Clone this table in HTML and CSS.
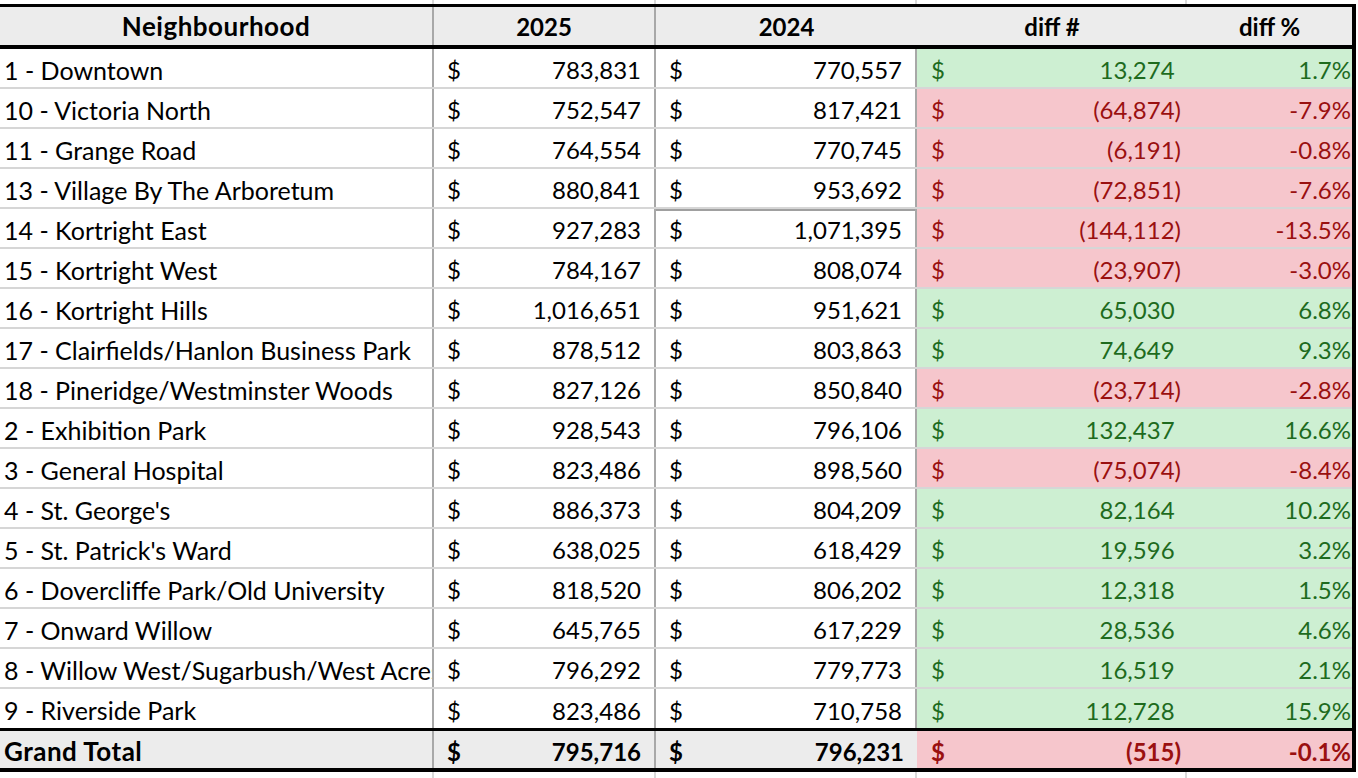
FILE: index.html
```html
<!DOCTYPE html>
<html>
<head>
<meta charset="utf-8">
<link rel="stylesheet" href="styles.css">
</head>
<body>
<div class="sheet">
  <div class="strip"><span></span><span></span><span></span><span></span><span class="last"></span></div>
  <div class="table">
    <div class="row head">
      <div class="cell center vr wide">Neighbourhood</div>
      <div class="cell center vr">2025</div>
      <div class="cell center">2024</div>
      <div class="cell center">diff #</div>
      <div class="cell center">diff %</div>
    </div>

    <div class="row">
      <div class="cell name vr">1 - Downtown</div>
      <div class="cell money vr"><span>$</span><span>783,831</span></div>
      <div class="cell money vr"><span>$</span><span>770,557</span></div>
      <div class="cell money diff good"><span>$</span><span>13,274<i class="ph">)</i></span></div>
      <div class="cell pct good">1.7%</div>
    </div>
    <div class="row">
      <div class="cell name vr">10 - Victoria North</div>
      <div class="cell money vr"><span>$</span><span>752,547</span></div>
      <div class="cell money vr"><span>$</span><span>817,421</span></div>
      <div class="cell money diff bad"><span>$</span><span>(64,874)</span></div>
      <div class="cell pct bad">-7.9%</div>
    </div>
    <div class="row">
      <div class="cell name vr">11 - Grange Road</div>
      <div class="cell money vr"><span>$</span><span>764,554</span></div>
      <div class="cell money vr"><span>$</span><span>770,745</span></div>
      <div class="cell money diff bad"><span>$</span><span>(6,191)</span></div>
      <div class="cell pct bad">-0.8%</div>
    </div>
    <div class="row">
      <div class="cell name vr">13 - Village By The Arboretum</div>
      <div class="cell money vr"><span>$</span><span>880,841</span></div>
      <div class="cell money vr"><span>$</span><span>953,692</span></div>
      <div class="cell money diff bad"><span>$</span><span>(72,851)</span></div>
      <div class="cell pct bad">-7.6%</div>
    </div>
    <div class="row">
      <div class="cell name vr">14 - Kortright East</div>
      <div class="cell money vr"><span>$</span><span>927,283</span></div>
      <div class="cell money vr topline"><span>$</span><span>1,071,395</span></div>
      <div class="cell money diff bad"><span>$</span><span>(144,112)</span></div>
      <div class="cell pct bad">-13.5%</div>
    </div>
    <div class="row">
      <div class="cell name vr">15 - Kortright West</div>
      <div class="cell money vr"><span>$</span><span>784,167</span></div>
      <div class="cell money vr"><span>$</span><span>808,074</span></div>
      <div class="cell money diff bad"><span>$</span><span>(23,907)</span></div>
      <div class="cell pct bad">-3.0%</div>
    </div>
    <div class="row">
      <div class="cell name vr">16 - Kortright Hills</div>
      <div class="cell money vr"><span>$</span><span>1,016,651</span></div>
      <div class="cell money vr"><span>$</span><span>951,621</span></div>
      <div class="cell money diff good"><span>$</span><span>65,030<i class="ph">)</i></span></div>
      <div class="cell pct good">6.8%</div>
    </div>
    <div class="row">
      <div class="cell name vr">17 - Clairfields/Hanlon Business Park</div>
      <div class="cell money vr"><span>$</span><span>878,512</span></div>
      <div class="cell money vr"><span>$</span><span>803,863</span></div>
      <div class="cell money diff good"><span>$</span><span>74,649<i class="ph">)</i></span></div>
      <div class="cell pct good">9.3%</div>
    </div>
    <div class="row">
      <div class="cell name vr">18 - Pineridge/Westminster Woods</div>
      <div class="cell money vr"><span>$</span><span>827,126</span></div>
      <div class="cell money vr"><span>$</span><span>850,840</span></div>
      <div class="cell money diff bad"><span>$</span><span>(23,714)</span></div>
      <div class="cell pct bad">-2.8%</div>
    </div>
    <div class="row">
      <div class="cell name vr">2 - Exhibition Park</div>
      <div class="cell money vr"><span>$</span><span>928,543</span></div>
      <div class="cell money vr"><span>$</span><span>796,106</span></div>
      <div class="cell money diff good"><span>$</span><span>132,437<i class="ph">)</i></span></div>
      <div class="cell pct good">16.6%</div>
    </div>
    <div class="row">
      <div class="cell name vr">3 - General Hospital</div>
      <div class="cell money vr"><span>$</span><span>823,486</span></div>
      <div class="cell money vr"><span>$</span><span>898,560</span></div>
      <div class="cell money diff bad"><span>$</span><span>(75,074)</span></div>
      <div class="cell pct bad">-8.4%</div>
    </div>
    <div class="row">
      <div class="cell name vr">4 - St. George's</div>
      <div class="cell money vr"><span>$</span><span>886,373</span></div>
      <div class="cell money vr"><span>$</span><span>804,209</span></div>
      <div class="cell money diff good"><span>$</span><span>82,164<i class="ph">)</i></span></div>
      <div class="cell pct good">10.2%</div>
    </div>
    <div class="row">
      <div class="cell name vr">5 - St. Patrick's Ward</div>
      <div class="cell money vr"><span>$</span><span>638,025</span></div>
      <div class="cell money vr"><span>$</span><span>618,429</span></div>
      <div class="cell money diff good"><span>$</span><span>19,596<i class="ph">)</i></span></div>
      <div class="cell pct good">3.2%</div>
    </div>
    <div class="row">
      <div class="cell name vr">6 - Dovercliffe Park/Old University</div>
      <div class="cell money vr"><span>$</span><span>818,520</span></div>
      <div class="cell money vr"><span>$</span><span>806,202</span></div>
      <div class="cell money diff good"><span>$</span><span>12,318<i class="ph">)</i></span></div>
      <div class="cell pct good">1.5%</div>
    </div>
    <div class="row">
      <div class="cell name vr">7 - Onward Willow</div>
      <div class="cell money vr"><span>$</span><span>645,765</span></div>
      <div class="cell money vr"><span>$</span><span>617,229</span></div>
      <div class="cell money diff good"><span>$</span><span>28,536<i class="ph">)</i></span></div>
      <div class="cell pct good">4.6%</div>
    </div>
    <div class="row">
      <div class="cell name vr">8 - Willow West/Sugarbush/West Acres</div>
      <div class="cell money vr"><span>$</span><span>796,292</span></div>
      <div class="cell money vr"><span>$</span><span>779,773</span></div>
      <div class="cell money diff good"><span>$</span><span>16,519<i class="ph">)</i></span></div>
      <div class="cell pct good">2.1%</div>
    </div>
    <div class="row lastrow">
      <div class="cell name vr">9 - Riverside Park</div>
      <div class="cell money vr"><span>$</span><span>823,486</span></div>
      <div class="cell money vr"><span>$</span><span>710,758</span></div>
      <div class="cell money diff good"><span>$</span><span>112,728<i class="ph">)</i></span></div>
      <div class="cell pct good">15.9%</div>
    </div>

    <div class="row total">
      <div class="cell name vr wide">Grand Total</div>
      <div class="cell money vr"><span>$</span><span>795,716</span></div>
      <div class="cell money"><span>$</span><span>796,231</span></div>
      <div class="cell money diff bad"><span>$</span><span>(515)</span></div>
      <div class="cell pct bad">-0.1%</div>
    </div>
  </div>
  <div class="strip bottom"><span></span><span></span><span></span><span></span><span class="last"></span></div>
</div>
</body>
</html>
```

FILE: styles.css
```css
body {
  margin: 0;
  background: #ffffff;
  font-family: Lato, "Open Sans", sans-serif;
  font-size: 24px;
  color: #000000;
}

.sheet {
  width: 1358px;
}

.strip {
  display: grid;
  grid-template-columns: 434px 222px 261px 270px 165px;
  height: 4px;
}

.strip span {
  border-right: 2px solid #d9d9d9;
}

.strip span.last {
  border-right: none;
}

.strip.bottom {
  height: 6px;
}

.table {
  width: 1352px;
  border-top: 3px solid #000;
  border-right: 4px solid #000;
  border-bottom: 4px solid #000;
}

.row {
  display: grid;
  grid-template-columns: 434px 222px 261px 270px 165px;
  height: 40px;
  box-sizing: border-box;
  border-bottom: 2px solid #d6d6d6;
}

.row.head {
  height: 42px;
  border-bottom: 4px solid #000;
  background: #ececec;
  font-weight: 700;
}

.row.lastrow {
  height: 39px;
  border-bottom: none;
}

.row.total {
  height: 40px;
  border-top: 3px solid #000;
  border-bottom: none;
  background: #ececec;
  font-weight: 700;
}

.cell {
  display: flex;
  align-items: center;
  box-sizing: border-box;
  padding: 3px 13px 0 13px;
  overflow: hidden;
  white-space: nowrap;
}

.cell.center {
  justify-content: center;
  padding: 0;
}

.cell.name {
  padding-left: 4px;
  padding-right: 0;
  font-size: 25px;
}

.cell.wide {
  font-size: 26px;
  letter-spacing: 0.5px;
}

.cell.money {
  justify-content: space-between;
}

.cell.diff {
  padding-left: 14px;
  padding-right: 6px;
}

.cell.pct {
  justify-content: flex-end;
  padding-right: 1px;
}

.vr {
  border-right: 2px solid #a8a8a8;
}

.topline {
  box-shadow: inset 0 2px 0 #a0a0a0;
}

.good {
  background: #cdefd2;
  color: #1e6b1e;
}

.bad {
  background: #f6c6cc;
  color: #9a1010;
}

.ph {
  font-style: normal;
  visibility: hidden;
}
```
